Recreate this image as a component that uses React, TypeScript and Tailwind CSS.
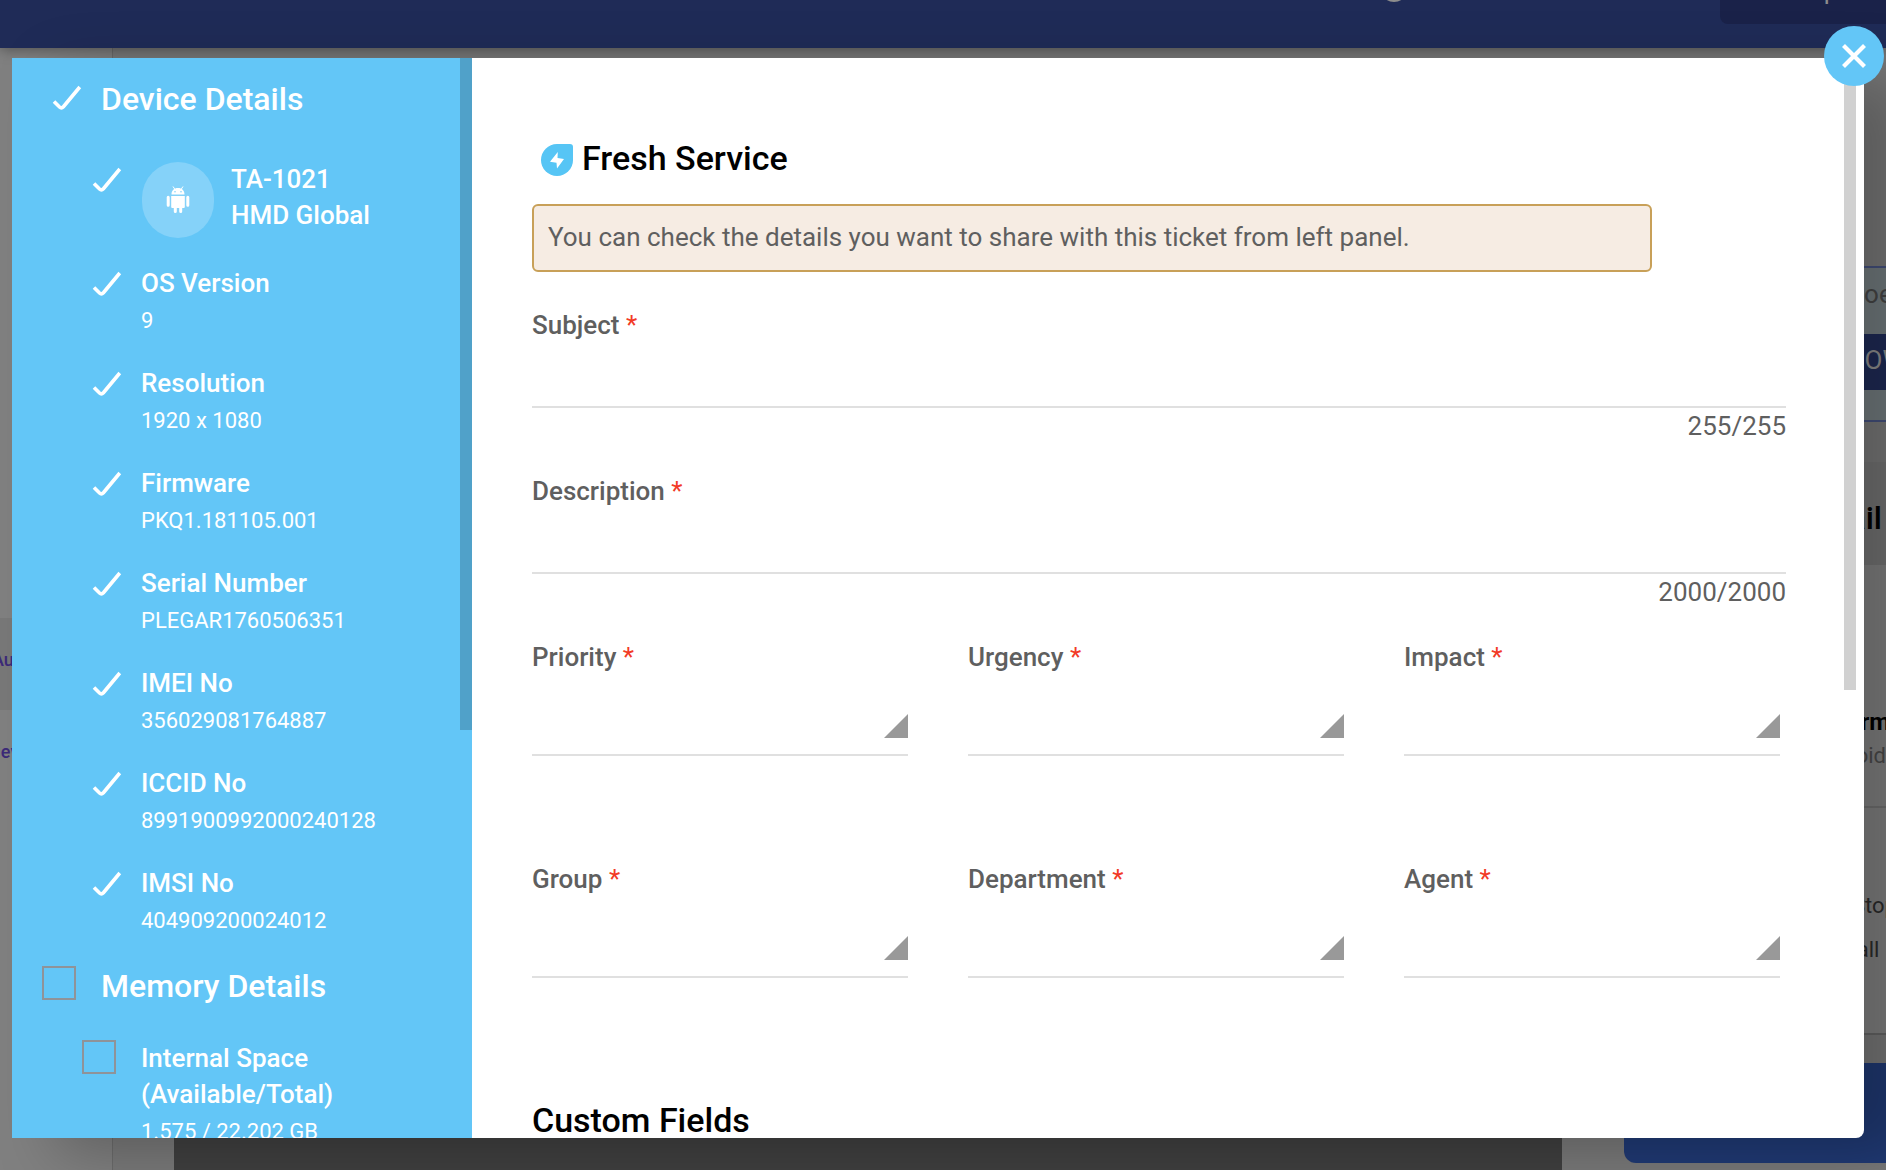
import React from 'react';

type SelectField = { id: string; label: string };

interface DetailRow {
  id: string;
  label: string;
  value: string;
  checked: boolean;
}

const DEVICE_ROWS: DetailRow[] = [
  { id: 'os', label: 'OS Version', value: '9', checked: true },
  { id: 'resolution', label: 'Resolution', value: '1920 x 1080', checked: true },
  { id: 'firmware', label: 'Firmware', value: 'PKQ1.181105.001', checked: true },
  { id: 'serial', label: 'Serial Number', value: 'PLEGAR1760506351', checked: true },
  { id: 'imei', label: 'IMEI No', value: '356029081764887', checked: true },
  { id: 'iccid', label: 'ICCID No', value: '8991900992000240128', checked: true },
  { id: 'imsi', label: 'IMSI No', value: '404909200024012', checked: true },
];

const SELECT_ROWS: SelectField[][] = [
  [
    { id: 'priority', label: 'Priority' },
    { id: 'urgency', label: 'Urgency' },
    { id: 'impact', label: 'Impact' },
  ],
  [
    { id: 'group', label: 'Group' },
    { id: 'department', label: 'Department' },
    { id: 'agent', label: 'Agent' },
  ],
];

const Check: React.FC<{ id: string; checked: boolean }> = ({ id, checked }) => (
  <span className="relative block size-[34px] shrink-0">
    <input
      id={id}
      type="checkbox"
      defaultChecked={checked}
      className="peer block size-[34px] appearance-none border-2 border-[#8f9399] checked:border-transparent"
    />
    <svg
      viewBox="0 0 34 34"
      className="pointer-events-none absolute inset-0 hidden size-[34px] overflow-visible peer-checked:block"
      fill="none"
      stroke="#fff"
      strokeWidth="3.6"
    >
      <path d="M12 22.500 L17.500 28 Q19.500 29.800 21.400 27.700 L37.800 8" />
    </svg>
  </span>
);

const Detail: React.FC<{ row: DetailRow }> = ({ row }) => (
  <li className="flex h-[100px] gap-[25px] pl-[70px]">
    <Check id={row.id} checked={row.checked} />
    <label htmlFor={row.id} className="block">
      <span className="block text-[26px] leading-9 font-medium">{row.label}</span>
      <span className="mt-1 block text-[22px] leading-8">{row.value}</span>
    </label>
  </li>
);

const Label: React.FC<{ htmlFor: string; children: React.ReactNode }> = ({ htmlFor, children }) => (
  <label htmlFor={htmlFor} className="block text-[26px] leading-9 font-medium text-[#5f5f5f]">
    {children} <span className="font-normal text-[#f23a26]">*</span>
  </label>
);

const TextField: React.FC<{ id: string; label: string; max: number }> = ({ id, label, max }) => (
  <div className="h-[166px]">
    <Label htmlFor={id}>{label}</Label>
    <input id={id} maxLength={max} className="block h-[65px] w-full border-b-2 border-[#e0e0e0] outline-none" />
    <div className="text-right text-[26px] leading-9 text-[#5f5f5f]">{max}/{max}</div>
  </div>
);

const Select: React.FC<SelectField> = ({ id, label }) => (
  <div className="flex-1">
    <Label htmlFor={id}>{label}</Label>
    <div className="relative">
      <select id={id} className="block h-[81px] w-full appearance-none border-b-2 border-[#e0e0e0] bg-transparent outline-none" />
      <svg viewBox="0 0 24 24" className="pointer-events-none absolute right-0 bottom-[18px] size-6" fill="#999">
        <path d="M24 0V24H0Z" />
      </svg>
    </div>
  </div>
);

const Backdrop: React.FC = () => (
  <div aria-hidden="true" className="flex h-full flex-col bg-[#7a7a7a]">
    <header className="relative z-10 flex h-12 justify-end bg-[#1f2b57] shadow-[0_2px_12px_rgba(0,0,0,0.35)]">
      <div className="mr-[312px] -mt-[26px] size-7 rounded-full bg-[#8d8d8d]" />
      <div className="-mt-9 flex h-[60px] w-[166px] items-end justify-center rounded-bl-lg bg-[#1a2249] pb-4 pl-14 text-[26px] leading-9 text-[#8d8d8d]">p</div>
    </header>
    <div className="flex min-h-0 flex-1">
      <aside className="w-[113px] shrink-0 overflow-hidden border-r border-[#6c6c6c] bg-[#808080] pt-[570px] text-lg font-medium text-[#3c2a78]">
        <div className="-ml-2 flex h-[92px] items-center bg-[#787878] pb-2">Auto</div>
        <div className="-ml-3 flex h-[92px] items-center pb-2">New</div>
      </aside>
      <main className="flex flex-1 flex-col justify-end pl-[61px]">
        <div className="h-12 bg-[#404040]" />
      </main>
      <aside className="w-[324px] shrink-0 overflow-hidden pl-[62px] whitespace-nowrap">
        <div className="mt-[218px] -ml-2 h-[156px] border-y-2 border-[#46527f] bg-[#747d80] text-[26px] text-[#484848]">
          <div className="h-[66px] pt-2 pl-[231px] leading-9">Doe</div>
          <div className="h-14 bg-[#1f2b57] pt-2 pl-[230px] leading-9 text-[#909090]">NOW</div>
        </div>
        <div className="mt-10 flex h-[103px] items-center justify-end bg-[#757575] pt-2 pr-1 text-[32px] font-medium text-black">Detail</div>
        <div className="h-[470px] border-b-2 border-[#666] bg-[#828282] text-[22px] text-[#2c2c2c]">
          <div className="h-[243px] border-b-2 border-[#727272] pt-[139px] pl-[210px] leading-8">
            <div className="text-2xl leading-9 font-bold text-black">Form</div>
            <div className="text-[#4c4c4c]">Droid</div>
          </div>
          <div className="pt-[82px] pl-[228px] leading-8">Stop</div>
          <div className="mt-3 pl-[196px] leading-8">Install</div>
        </div>
        <div className="mt-[28px] h-[100px] rounded-bl-xl bg-[#203a75]" />
      </aside>
    </div>
  </div>
);

export default function App() {
  return (
    <div className="relative h-screen overflow-hidden font-[Roboto,sans-serif]">
      <Backdrop />
      <div className="absolute inset-0 z-20 pt-[58px] pr-[22px] pb-8 pl-3">
        <div role="dialog" aria-labelledby="dialog-title" className="relative flex h-full rounded-r-lg bg-white shadow-[44px_16px_60px_rgba(0,0,0,0.25)]">
          <section className="relative w-[460px] shrink-0 overflow-hidden bg-[#63c6f7] text-white">
            <div className="flex h-[100px] gap-[25px] pt-[21px] pl-[30px]">
              <Check id="device" checked />
              <label htmlFor="device" className="text-[32px] leading-10 font-medium">Device Details</label>
            </div>
            <div className="flex h-[107px] pt-[3px] pl-[70px]">
              <Check id="model" checked />
              <label htmlFor="model" className="ml-[26px] flex items-start gap-[17px]">
                <span className="mt-px flex h-[76px] w-[72px] items-center justify-center rounded-[36px] bg-[#85d2f9]">
                  <svg viewBox="0 0 24 28" className="h-7 w-6" fill="#fff">
                    <path d="M5.500 8.500C5.500 4.500 8 2 12 2s6.500 2.500 6.500 6.500zM5.200 10h13.600v11a1 1 0 0 1-1 1H6.200a1 1 0 0 1-1-1z" />
                    <path d="M2.200 11.200v8M21.800 11.200v8M9.300 21v4.500M14.700 21v4.500" stroke="#fff" strokeWidth="3" strokeLinecap="round" />
                    <path d="M7 .5l2 3M17 .5l-2 3" stroke="#fff" />
                    <circle cx="9" cy="5.800" r=".8" fill="#85d2f9" />
                    <circle cx="15" cy="5.800" r=".8" fill="#85d2f9" />
                  </svg>
                </span>
                <span className="text-[26px] leading-9 font-medium">TA-1021<br />HMD Global</span>
              </label>
            </div>
            <ul>
              {DEVICE_ROWS.map((row) => <Detail key={row.id} row={row} />)}
            </ul>
            <div className="mt-px flex h-[74px] gap-[25px] pl-[30px]">
              <Check id="memory" checked={false} />
              <label htmlFor="memory" className="text-[32px] leading-10 font-medium">Memory Details</label>
            </div>
            <div className="flex gap-[25px] pl-[70px]">
              <Check id="internal" checked={false} />
              <label htmlFor="internal">
                <span className="block text-[26px] leading-9 font-medium">Internal Space<br />(Available/Total)</span>
                <span className="mt-1 block text-[22px] leading-8">1.575 / 22.202 GB</span>
              </label>
            </div>
            <div className="absolute top-0 right-0 h-[672px] w-3 bg-[#50a1c9]" />
          </section>

          <form className="relative flex-1 overflow-hidden rounded-r-lg pt-20 pr-[78px] pl-[60px]">
            <div className="flex items-center gap-[9px] pl-[9px]">
              <svg viewBox="0 0 32 32" className="mt-[3px] size-8">
                <path d="M16 0H29a3 3 0 0 1 3 3V16A16 16 0 1 1 16 0Z" fill="#56c5f5" />
                <path d="M16.800 8 L9 17.800L15.500 18.800L16 24.500L23 15L16.500 14Z" fill="#fff" />
              </svg>
              <h1 id="dialog-title" className="text-[34px] leading-10 font-medium text-black">Fresh Service</h1>
            </div>
            <p className="mt-[26px] mr-[134px] h-[68px] rounded-md border-2 border-[#c8a058] bg-[#f6ece3] px-[14px] pt-[13px] text-[26px] leading-9 text-[#5f5f5f]">
              You can check the details you want to share with this ticket from left panel.
            </p>
            <div className="mt-[35px]">
              <TextField id="subject" label="Subject" max={255} />
              <TextField id="description" label="Description" max={2000} />
            </div>
            {SELECT_ROWS.map((fields, i) => (
              <div key={i} className="mr-[6px] flex h-[222px] gap-[60px]">
                {fields.map((field) => <Select key={field.id} {...field} />)}
              </div>
            ))}
            <h2 className="mt-[17px] text-[34px] leading-10 font-medium text-black">Custom Fields</h2>
            <div className="absolute top-0 right-2 h-[632px] w-3 bg-[#d1d1d1]" />
          </form>

          <button type="button" aria-label="Close" className="absolute -top-8 -right-5 flex size-[60px] items-center justify-center rounded-full bg-[#63c6f7]">
            <svg viewBox="0 0 24 24" className="size-6" stroke="#fff" strokeWidth="4.200">
              <path d="M1.500 1.500l21 21M22.500 1.500l-21 21" />
            </svg>
          </button>
        </div>
      </div>
    </div>
  );
}
